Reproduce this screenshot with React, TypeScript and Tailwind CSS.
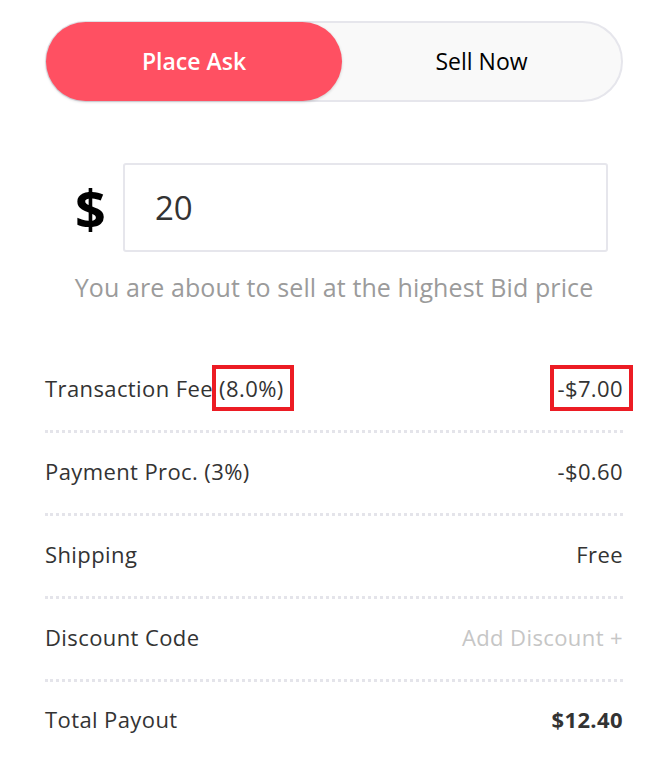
import React from "react";

const rows = [
  { label: "Transaction Fee", note: "(8.0%)", value: "-$7.00", flagged: true },
  { label: "Payment Proc. (3%)", value: "-$0.60" },
  { label: "Shipping", value: "Free" },
  { label: "Discount Code", value: "Add Discount +", muted: true },
];

function Flag({ children }: { children: React.ReactNode }) {
  // red annotation frame drawn over the text
  return (
    <span className="relative inline-block">
      {children}
      <span className="pointer-events-none absolute -left-[7px] -right-[10px] -top-[7px] -bottom-[6px] border-[4px] border-[#ec1c24]" />
    </span>
  );
}

export default function App() {
  return (
    <div className="min-h-[761px] w-[650px] bg-white font-['Open_Sans',sans-serif] text-[#333]">
      <div className="ml-[45px] w-[578px] pt-[21px]">
        <div className="flex h-[81px] items-stretch rounded-full border-2 border-[#e6e6ec] bg-[#f9f9f9]">
          <button className="-my-[1px] -ml-[1px] w-[296px] rounded-full bg-[#ff5062] text-[23px] font-semibold text-white shadow-[0_1px_3px_rgba(0,0,0,0.18)]">
            Place Ask
          </button>
          <button className="flex-1 text-[23px] font-medium text-black">Sell Now</button>
        </div>

        <div className="mt-[61px] flex items-center pl-[30px]">
          <span className="w-[32px] text-[54px] font-bold leading-none text-black">$</span>
          <div className="ml-[16px] flex h-[89px] w-[485px] items-center rounded-[3px] border-2 border-[#e6e6ec] pl-[30px] text-[33px] text-[#333]">
            20
          </div>
        </div>

        <p className="mt-[20px] text-center text-[25px] leading-[30px] tracking-[0.1px] text-[#9b9b9b]">
          You are about to sell at the highest Bid price
        </p>

        <div className="mt-[48px]">
          {rows.map((row) => (
            <div
              key={row.label}
              className="flex h-[83px] items-center justify-between border-b-[3px] border-dotted border-[#e4e4ea] pb-[3px] text-[22px] tracking-[0.4px]"
            >
              <span>
                {row.label}
                {row.note && (
                  <>
                    {" "}
                    <Flag>{row.note}</Flag>
                  </>
                )}
              </span>
              {row.flagged ? (
                <Flag>{row.value}</Flag>
              ) : (
                <span className={row.muted ? "text-[#c6c6c6]" : ""}>{row.value}</span>
              )}
            </div>
          ))}
          <div className="flex h-[80px] items-center justify-between pb-[6px] text-[22px] tracking-[0.4px]">
            <span>Total Payout</span>
            <span className="font-bold">$12.40</span>
          </div>
        </div>
      </div>
    </div>
  );
}
